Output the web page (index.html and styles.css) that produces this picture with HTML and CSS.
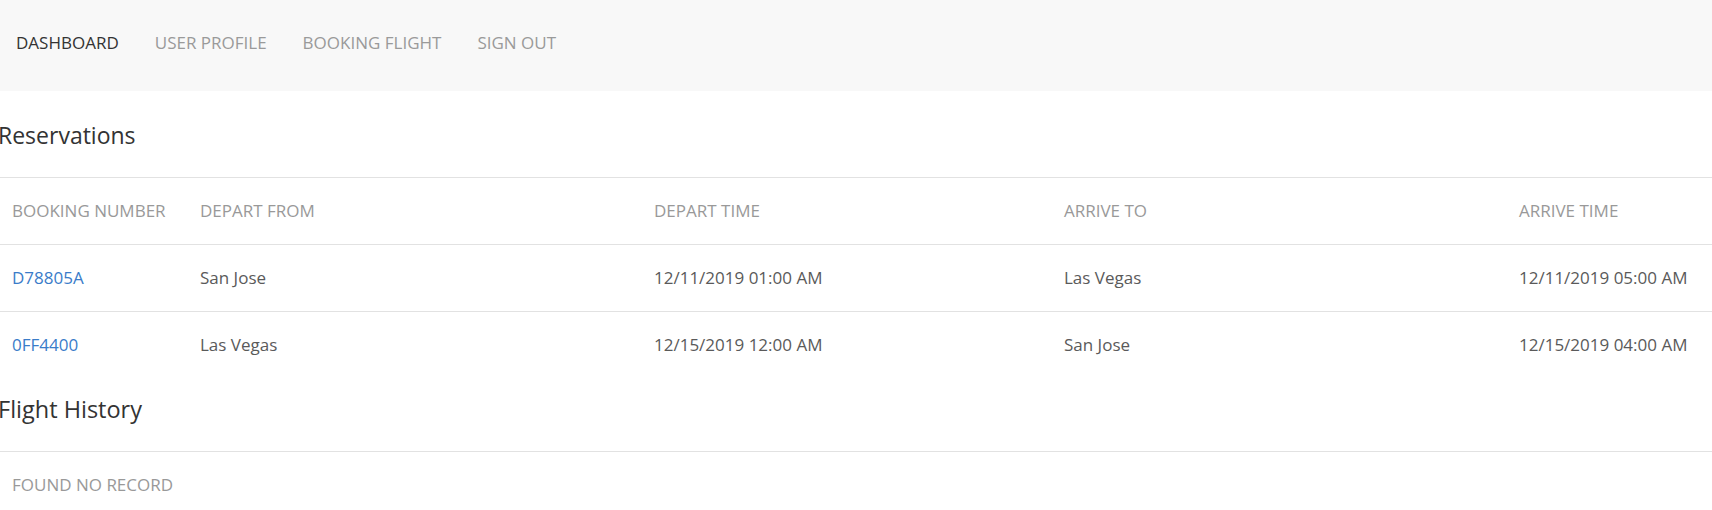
FILE: index.html
```html
<!DOCTYPE html>
<html lang="en">
<head>
<meta charset="utf-8">
<title>Dashboard</title>
<link rel="stylesheet" href="styles.css">
</head>
<body>
<nav class="navbar">
  <a class="nav-link active" href="#">DASHBOARD</a>
  <a class="nav-link" href="#">USER PROFILE</a>
  <a class="nav-link" href="#">BOOKING FLIGHT</a>
  <a class="nav-link" href="#">SIGN OUT</a>
</nav>
<main class="content">
  <h3 class="section-title">Reservations</h3>
  <table class="data-table">
    <colgroup>
      <col class="col-num">
      <col class="col-from">
      <col class="col-dtime">
      <col class="col-to">
      <col class="col-atime">
    </colgroup>
    <thead>
      <tr>
        <th>BOOKING NUMBER</th>
        <th>DEPART FROM</th>
        <th>DEPART TIME</th>
        <th>ARRIVE TO</th>
        <th>ARRIVE TIME</th>
      </tr>
    </thead>
    <tbody>
      <tr>
        <td><a class="booking-link" href="#">D78805A</a></td>
        <td>San Jose</td>
        <td>12/11/2019 01:00 AM</td>
        <td>Las Vegas</td>
        <td>12/11/2019 05:00 AM</td>
      </tr>
      <tr>
        <td><a class="booking-link" href="#">0FF4400</a></td>
        <td>Las Vegas</td>
        <td>12/15/2019 12:00 AM</td>
        <td>San Jose</td>
        <td>12/15/2019 04:00 AM</td>
      </tr>
    </tbody>
  </table>
  <h3 class="section-title history">Flight History</h3>
  <div class="empty-row">FOUND NO RECORD</div>
</main>
</body>
</html>
```
FILE: styles.css
```css
* {
  box-sizing: border-box;
}

body {
  margin: 0;
  font-family: "Open Sans", "Noto Sans", sans-serif;
  font-size: 17px;
  color: #555;
  background: #fff;
}

.navbar {
  height: 91px;
  background: #f8f8f8;
  display: flex;
  align-items: center;
  gap: 36px;
  padding: 0 0 5px 16px;
}

.nav-link {
  color: #9a9a9a;
  text-decoration: none;
  font-size: 17px;
  line-height: 22px;
}

.nav-link.active {
  color: #333;
}

.section-title {
  margin: 31px 0 29px -2px;
  font-size: 23px;
  line-height: 26px;
  font-weight: 400;
  color: #333;
}

.section-title.history {
  margin-top: 18px;
  font-size: 23.5px;
}

.data-table {
  width: 100%;
  border-collapse: collapse;
  table-layout: fixed;
}

.col-num { width: 188px; }
.col-from { width: 454px; }
.col-dtime { width: 410px; }
.col-to { width: 455px; }
.col-atime { width: 205px; }

.data-table th,
.data-table td {
  border-top: 1px solid #e2e2e2;
  padding: 22px 12px;
  line-height: 22px;
  text-align: left;
  white-space: nowrap;
}

.data-table th {
  font-weight: 400;
  color: #999;
}

.data-table td {
  color: #5a5a5a;
}

.booking-link {
  color: #3a7cc9;
  text-decoration: none;
}

.empty-row {
  border-top: 1px solid #e2e2e2;
  padding: 22px 12px;
  line-height: 22px;
  color: #999;
}
```
